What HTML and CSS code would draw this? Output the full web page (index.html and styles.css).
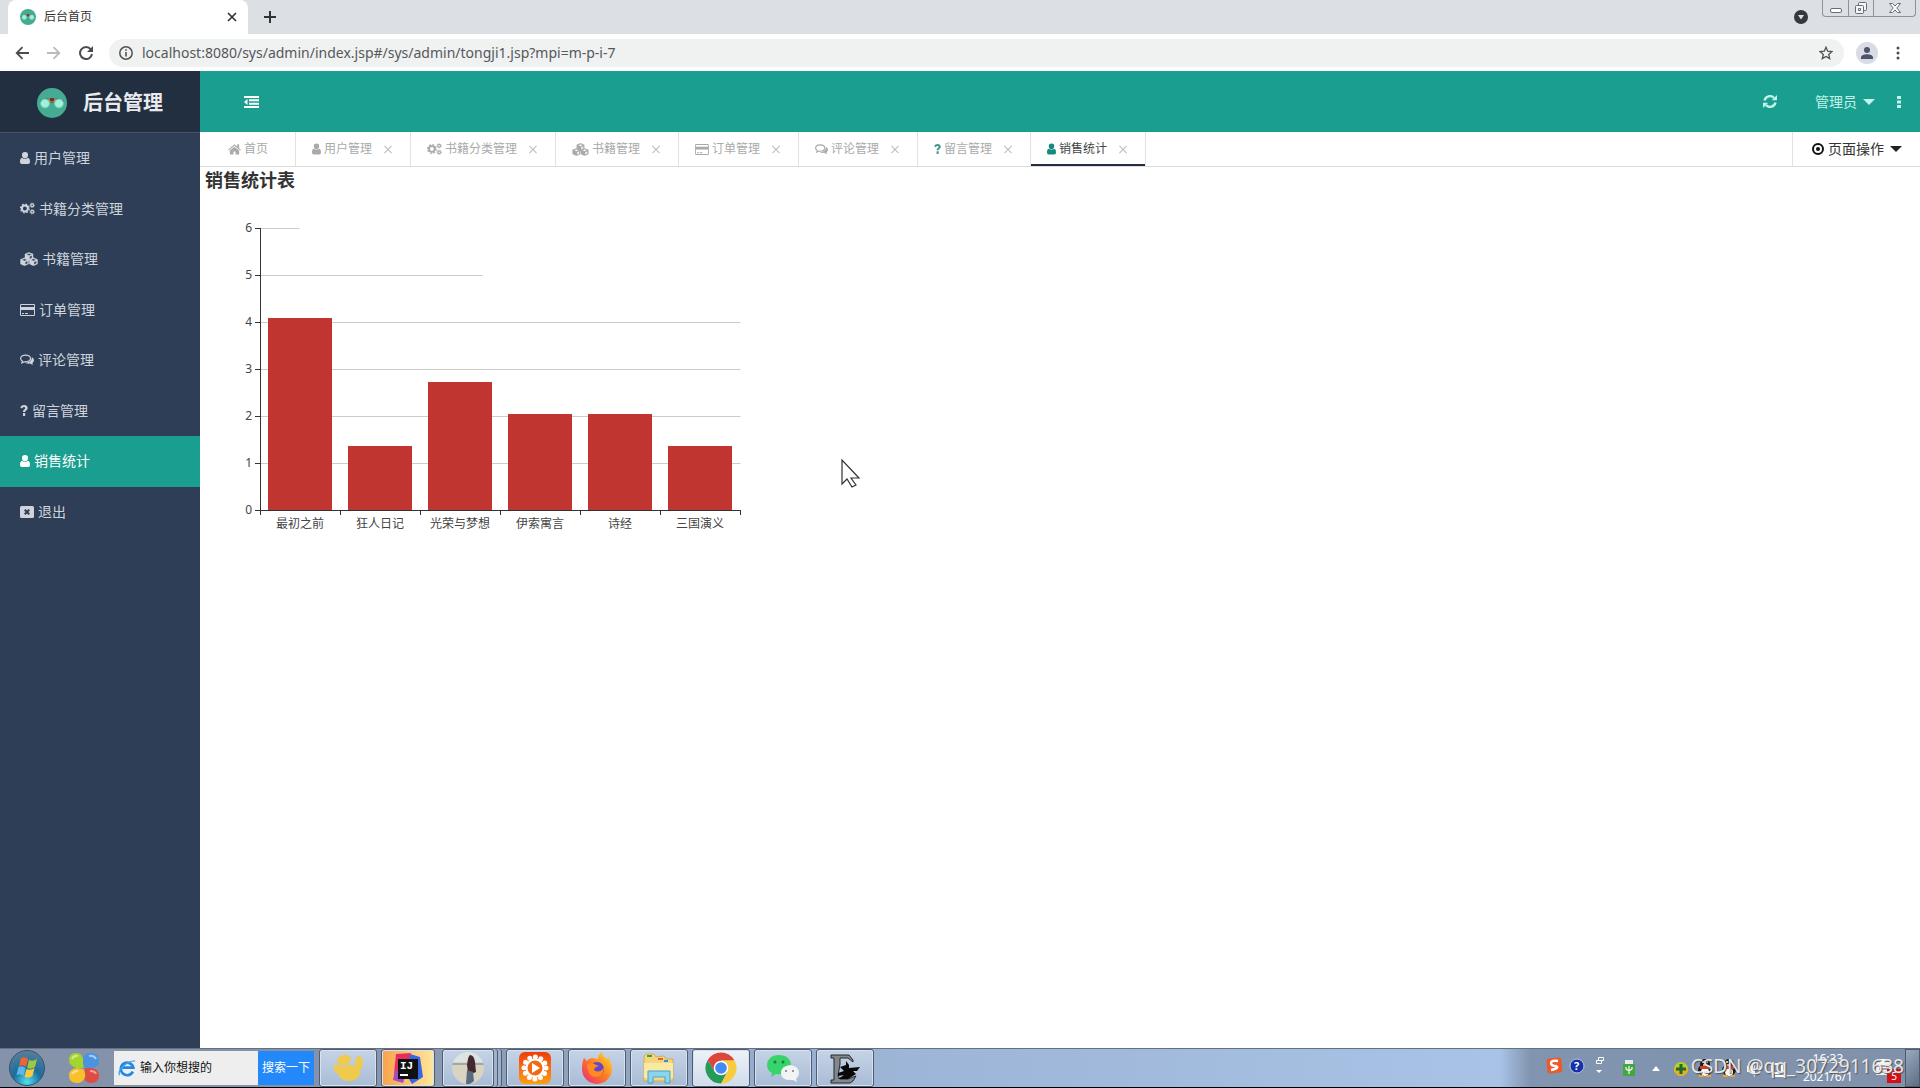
FILE: index.html
```html
<!DOCTYPE html>
<html lang="zh-CN">
<head>
<meta charset="utf-8">
<title>后台首页</title>
<link rel="stylesheet" href="styles.css">
</head>
<body>
<svg class="defs" aria-hidden="true">
  <defs>
    <symbol id="user" viewBox="0 0 10 12"><path d="M5 0a3 3 0 0 0-3 3.300C2 5 3.200 6.500 5 6.500S8 5 8 3.300A3 3 0 0 0 5 0zM2.200 5.800C.6 6 0 7.500 0 9.800 0 11.200.7 12 1.900 12h6.200c1.200 0 1.900-.8 1.900-2.200 0-2.300-.6-3.800-2.200-4-.7.8-1.700 1.300-2.800 1.300s-2.100-.5-2.800-1.300z"/></symbol>
    <symbol id="cogs" viewBox="0 0 16 13"><g fill="none" stroke="currentColor"><circle cx="5.200" cy="6.500" r="3.200" stroke-width="2.200"/><circle cx="5.200" cy="6.500" r="4.700" stroke-width="1.300" stroke-dasharray="1.900 1.790"/><circle cx="13" cy="3" r="1.500" stroke-width="1.300"/><circle cx="13" cy="3" r="2.400" stroke-width=".8" stroke-dasharray="1 .88"/><circle cx="13" cy="10" r="1.500" stroke-width="1.300"/><circle cx="13" cy="10" r="2.400" stroke-width=".8" stroke-dasharray="1 .88"/></g></symbol>
    <symbol id="cubes" viewBox="0 0 18 14"><g fill="currentColor" stroke="currentColor" stroke-width=".4" stroke-linejoin="round"><path fill-rule="evenodd" d="M9 .4 5 2v4.500L9 8.400l4-1.900V2zM9 1.400l2.700 1L9 3.500l-2.700-1.100zM9.600 4.500 12 3.500V6L9.600 7.200z"/><path fill-rule="evenodd" d="M4.600 5.800.5 7.400v4.500l4.100 1.800 4-1.800V7.400zM4.600 6.800l2.700 1-2.700 1.100-2.700-1.100zM5.200 9.900l2.400-1v2.500l-2.400 1.200z"/><path fill-rule="evenodd" d="m13.400 5.800-4 1.600v4.500l4 1.800 4.100-1.800V7.400zM13.400 6.800l2.700 1-2.700 1.100-2.700-1.100zM14 9.900l2.400-1v2.500L14 12.600z"/></g></symbol>
    <symbol id="card" viewBox="0 0 15 12"><path fill-rule="evenodd" d="M1.200 0h12.600Q15 0 15 1.200v9.600q0 1.200-1.200 1.200H1.200Q0 12 0 10.800V1.200Q0 0 1.200 0zM1 1v2h13V1zM1 6v5h13V6zM2 9h2v1H2zM5 9h3v1H5z"/></symbol>
    <symbol id="comments" viewBox="0 0 15 12"><path d="M6 .7C3 .7.7 2.300.7 4.400c0 1.200.8 2.200 2 2.900L2 9c1.200-.3 2-.8 2.600-1.100C9 8.300 11.300 6.500 11.300 4.400S9 .7 6 .7z" fill="none" stroke="currentColor" stroke-width="1.300"/><path d="M12.600 3c1.600.8 2.400 2 2.400 3.200 0 1.300-.8 2.200-1.900 2.900l1.100 2.100c-1.700-.2-2.700-.8-3.400-1.400-2 .3-4 0-5.300-.9 4.400.1 7.300-2.400 7.100-5.900z"/></symbol>
    <symbol id="question" viewBox="0 0 8 12"><path d="M2.900 8.700h2.400V12H2.900zM0 2.600C.9.900 2.200 0 4.200 0 6.300 0 8 1.400 8 3.300c0 2.500-2.700 2.800-2.700 4.300H2.900c0-2.700 2.300-2.800 2.300-4.100 0-.8-.5-1.200-1.200-1.200-.9 0-1.400.6-2.100 1.500z"/></symbol>
    <symbol id="exit" viewBox="0 0 14 12"><path fill-rule="evenodd" d="M1.500 0h11Q14 0 14 1.500v9q0 1.500-1.500 1.500h-11Q0 12 0 10.500v-9Q0 0 1.500 0zM4 4.500 5.600 6 4 7.500 5.400 9 7 7.400 8.600 9 10 7.500 8.400 6 10 4.500 8.600 3 7 4.600 5.400 3z"/></symbol>
    <symbol id="home" viewBox="0 0 14 12"><path d="M7 1 0 6.800l.8.900L7 2.600l6.200 5.100.8-.9-2-1.700V1h-2v2.400zM7 3.600 2 7.700V12h3.900V8.600h2.200V12H12V7.700z"/></symbol>
    <symbol id="goggles" viewBox="0 0 30 30"><circle cx="15" cy="15" r="15" fill="#45ab92"/><path d="M3 13q4-4 10-2l2-1 2 1q6-2 10 2v2H3z" fill="#62695d"/><path d="M11 11h8v4h-2l-2-2-2 2h-2z" fill="#d66c3d"/><circle cx="8" cy="15.500" r="4.500" fill="#9ff0dc" stroke="#68c7ae"/><circle cx="22" cy="15.500" r="4.500" fill="#9ff0dc" stroke="#68c7ae"/><path d="M13 10h4v3h-4z" fill="#553d38"/></symbol>
  </defs>
</svg>

<header class="browser">
  <div class="tabstrip">
    <div class="browser-tab">
      <svg class="favicon"><use href="#goggles"/></svg>
      <span class="browser-title">后台首页</span>
      <button class="plain" aria-label="关闭标签页"><svg width="10" height="10" viewBox="0 0 10 10"><path d="m1 1 8 8M9 1 1 9" stroke="#333" stroke-width="1.700"/></svg></button>
    </div>
    <button class="plain newtab" aria-label="新标签页"><svg width="12" height="12" viewBox="0 0 12 12"><path d="M6 0v12M0 6h12" stroke="#333" stroke-width="2"/></svg></button>
    <div class="window-side">
      <svg class="tabsearch" width="14" height="14" viewBox="0 0 14 14"><circle cx="7" cy="7" r="7" fill="#35383d"/><path d="M4 5h6L7 9.500z" fill="#dee1e6"/></svg>
      <div class="window-controls">
        <button aria-label="最小化"><svg width="14" height="16" viewBox="0 0 14 16"><rect x="1.500" y="8.500" width="11" height="4" rx="1.500" fill="#fff" stroke="#676c75"/></svg></button>
        <button aria-label="还原"><svg width="14" height="16" viewBox="0 0 14 16"><g fill="#f4f5f7" stroke="#676c75"><rect x="4.500" y="2.500" width="8" height="8" rx="1"/><rect x="1.500" y="5.500" width="8" height="8" rx="1"/><path d="M4.500 8.500h2v2h-2z"/></g></svg></button>
        <button class="wide" aria-label="关闭"><svg width="14" height="16" viewBox="0 0 14 16"><path d="M1.500 3.500h3L7 6l2.500-2.500h3L8.800 8l3.700 4.500h-3L7 10l-2.500 2.500h-3L5.200 8z" fill="#fff" stroke="#676c75"/></svg></button>
      </div>
    </div>
  </div>
  <div class="toolbar">
    <button class="plain" aria-label="后退"><svg width="14" height="14" viewBox="0 0 14 14"><path d="M14 7H2M7.500 1.200 1.700 7l5.800 5.800" fill="none" stroke="#4a4d51" stroke-width="1.800"/></svg></button>
    <button class="plain" aria-label="前进"><svg width="14" height="14" viewBox="0 0 14 14"><path d="M0 7h12M6.500 1.200 12.300 7l-5.800 5.800" fill="none" stroke="#b9bbbe" stroke-width="1.800"/></svg></button>
    <button class="plain" aria-label="刷新"><svg width="14" height="14" viewBox="0 0 14 14"><path d="M11.800 3.300A6 6 0 1 0 13 8" fill="none" stroke="#4a4d51" stroke-width="2"/><path d="M14 0v6H8z" fill="#4a4d51"/></svg></button>
    <label class="address">
      <svg width="14" height="14" viewBox="0 0 14 14"><circle cx="7" cy="7" r="6.200" fill="none" stroke="#4f5256" stroke-width="1.500"/><path d="M6.200 6h1.600v4.500H6.200zM6.200 3.200h1.600v1.600H6.200z" fill="#4f5256"/></svg>
      <input type="text" aria-label="地址" value="localhost:8080/sys/admin/index.jsp#/sys/admin/tongji1.jsp?mpi=m-p-i-7">
      <svg width="14" height="14" viewBox="0 0 14 14"><path d="m7 1.200 1.700 4 4.300.4-3.300 2.800 1 4.200L7 10.400l-3.700 2.200 1-4.200L1 5.600l4.300-.4z" fill="none" stroke="#4f5256" stroke-width="1.300"/></svg>
    </label>
    <button class="plain" aria-label="账户"><svg width="22" height="22" viewBox="0 0 22 22"><circle cx="11" cy="11" r="11" fill="#dadce5"/><circle cx="11" cy="8" r="3" fill="#4e536b"/><path d="M5 17v-1.500C5 13 9 12.300 11 12.300s6 .7 6 3.200V17z" fill="#4e536b"/></svg></button>
    <button class="plain menu" aria-label="菜单"><svg width="4" height="14" viewBox="0 0 4 14"><g fill="#4a4d51"><circle cx="2" cy="2" r="1.500"/><circle cx="2" cy="7" r="1.500"/><circle cx="2" cy="12" r="1.500"/></g></svg></button>
  </div>
</header>

<div class="app">
  <aside class="sidebar">
    <div class="brand"><svg width="30" height="30"><use href="#goggles"/></svg><span>后台管理</span></div>
    <nav class="side-nav">
      <a href="#"><svg width="10" height="12"><use href="#user"/></svg>用户管理</a>
      <a href="#"><svg width="15" height="13"><use href="#cogs"/></svg>书籍分类管理</a>
      <a href="#"><svg width="18" height="14"><use href="#cubes"/></svg>书籍管理</a>
      <a href="#"><svg width="15" height="12"><use href="#card"/></svg>订单管理</a>
      <a href="#"><svg width="14" height="12"><use href="#comments"/></svg>评论管理</a>
      <a href="#"><svg width="8" height="11"><use href="#question"/></svg>留言管理</a>
      <a href="#" class="active"><svg width="10" height="12"><use href="#user"/></svg>销售统计</a>
      <a href="#"><svg width="14" height="12"><use href="#exit"/></svg>退出</a>
    </nav>
  </aside>
  <div class="main">
    <div class="topbar">
      <button class="plain" aria-label="收起菜单"><svg width="15" height="12" viewBox="0 0 15 12"><path d="M0 0h15v2H0zM5 3.300h10v2H5zM5 6.700h10v2H5zM0 10h15v2H0zM3.500 3v6L0 6z" fill="#fff"/></svg></button>
      <div class="top-actions">
        <button class="plain" aria-label="刷新"><svg width="14" height="13" viewBox="0 0 14 13"><path d="M1.500 5.500A5.500 5.500 0 0 1 11 3M12.500 7.500A5.500 5.500 0 0 1 3 10" fill="none" stroke="currentColor" stroke-width="2.400"/><path d="M14 0v5.200H8.800zM0 13V7.800h5.200z" fill="currentColor"/></svg></button>
        <button class="plain admin">管理员<i class="caret"></i></button>
        <button class="plain" aria-label="更多"><svg width="4" height="12" viewBox="0 0 4 12"><path d="M0 0h4v3H0zM0 4.500h4v3H0zM0 9h4v3H0z" fill="currentColor"/></svg></button>
      </div>
    </div>
    <div class="tabs">
      <a href="#" class="tab home"><svg width="13" height="12"><use href="#home"/></svg>首页</a>
      <div class="tab"><svg width="9" height="12"><use href="#user"/></svg><a href="#">用户管理</a><button class="close" aria-label="关闭"></button></div>
      <div class="tab"><svg width="15" height="12"><use href="#cogs"/></svg><a href="#">书籍分类管理</a><button class="close" aria-label="关闭"></button></div>
      <div class="tab"><svg width="17" height="13"><use href="#cubes"/></svg><a href="#">书籍管理</a><button class="close" aria-label="关闭"></button></div>
      <div class="tab"><svg width="14" height="11"><use href="#card"/></svg><a href="#">订单管理</a><button class="close" aria-label="关闭"></button></div>
      <div class="tab"><svg width="13" height="11"><use href="#comments"/></svg><a href="#">评论管理</a><button class="close" aria-label="关闭"></button></div>
      <div class="tab ask"><svg width="7" height="10"><use href="#question"/></svg><a href="#">留言管理</a><button class="close" aria-label="关闭"></button></div>
      <div class="tab current"><svg width="9" height="12"><use href="#user"/></svg><a href="#">销售统计</a><button class="close" aria-label="关闭"></button></div>
      <button class="plain page-ops"><svg width="12" height="12" viewBox="0 0 12 12"><circle cx="6" cy="6" r="5" fill="none" stroke="#111" stroke-width="2"/><circle cx="6" cy="6" r="2" fill="#111"/></svg>页面操作<i class="caret"></i></button>
    </div>
    <main class="content">
      <h1>销售统计表</h1>
      <svg class="chart" width="600" height="360" viewBox="0 0 600 360" role="img" aria-label="销售统计表">
        <path d="M60.500 35.500h39M60.500 82.500h222M60.500 129.500h480M60.500 176.500h480M60.500 223.500h480M60.500 270.500h480" stroke="#ccc"/>
        <g fill="#c03530">
          <rect x="68" y="125" width="64" height="192"/><rect x="148" y="253" width="64" height="64"/><rect x="228" y="189" width="64" height="128"/><rect x="308" y="221" width="64" height="96"/><rect x="388" y="221" width="64" height="96"/><rect x="468" y="253" width="64" height="64"/>
        </g>
        <path d="M60.500 35v287M55 317.500h486M55 35.500h5M55 82.500h5M55 129.500h5M55 176.500h5M55 223.500h5M55 270.500h5M140.500 317v5M220.500 317v5M300.500 317v5M380.500 317v5M460.500 317v5M540.500 317v5" fill="none" stroke="#333"/>
        <g class="y-labels"><text x="52" y="39">6</text><text x="52" y="86">5</text><text x="52" y="133">4</text><text x="52" y="180">3</text><text x="52" y="227">2</text><text x="52" y="274">1</text><text x="52" y="321">0</text></g>
        <g class="x-labels"><text x="100" y="335">最初之前</text><text x="180" y="335">狂人日记</text><text x="260" y="335">光荣与梦想</text><text x="340" y="335">伊索寓言</text><text x="420" y="335">诗经</text><text x="500" y="335">三国演义</text></g>
      </svg>
    </main>
  </div>
</div>

<footer class="taskbar">
  <button class="plain start" aria-label="开始"><svg width="36" height="36" viewBox="0 0 36 36"><defs><radialGradient id="orb" cx=".5" cy=".9" r=".9"><stop offset="0" stop-color="#4fe0f5"/><stop offset=".45" stop-color="#1b6d9c"/><stop offset="1" stop-color="#5d7f9b"/></radialGradient></defs><circle cx="18" cy="18" r="17.500" fill="url(#orb)" stroke="#3b5068"/><path d="M12 8q4-2 7 1l-2 8q-3-3-7-1z" fill="#ee6434"/><path d="M20 10q4 2 8-1l-2 8q-4 3-8 1z" fill="#9cc93f"/><path d="M9.500 17q4-2 7 1l-2 8q-3-3-7-1z" fill="#5db7ea"/><path d="M17.500 19q4 2 8-1l-2 8q-4 3-8 1z" fill="#fbc93a"/></svg></button>
  <button class="plain clover" aria-label="浏览器"><svg width="32" height="32" viewBox="0 0 32 32"><path d="M15 16H9Q1 14 1 8 1 1 8 1c6 0 7 5 8 9z" fill="#a4d52a"/><path d="M15 12Q14 1 23 1q8 0 8 7.500 0 7-8 7.500h-5z" fill="#4a93e0"/><path d="M17 16h5q9 0 9 7.500 0 7.500-8 7.500-7 0-7-7z" fill="#de4c42"/><path d="M15 17q3 4 2 8-2 6-8 6-8 0-8-7.500Q1 17 9 16z" fill="#f8c12b"/><path d="M4 7q2-4 6-3M21 4q5-1 7 3M4 22q2-3 6-3M22 19q5 0 6 3" stroke="#fff" stroke-opacity=".5" stroke-width="2" fill="none"/></svg></button>
  <form class="search">
    <svg width="18" height="20" viewBox="0 0 20 20"><path d="M16.500 14A7 7 0 1 1 17 9.500H5" fill="none" stroke="#2587e4" stroke-width="3"/><path d="M2 18C-1 14 8 2 19 2" fill="none" stroke="#39a5ef" stroke-width="1.500"/></svg>
    <input type="text" aria-label="搜索" value="输入你想搜的">
    <button type="button">搜索一下</button>
  </form>
  <div class="tasks">
    <button aria-label="应用"><svg width="32" height="32" viewBox="0 0 32 32"><g fill="#efca4d"><ellipse cx="17" cy="21" rx="11" ry="8"/><ellipse cx="6" cy="17" rx="4" ry="5" transform="rotate(-40 6 17)"/><ellipse cx="12" cy="8" rx="7" ry="5" transform="rotate(-15 12 8)"/><ellipse cx="27" cy="11" rx="4" ry="7"/></g></svg></button>
    <button class="small hot" aria-label="IntelliJ IDEA"><svg width="32" height="32" viewBox="0 0 32 32"><path d="m4 2 15-1-3 14L2 22z" fill="#e62d61"/><path d="m18 2 10 3 3 20-11 7-5-8z" fill="#3765e8"/><path d="m3 18 11 4-3 9-10-3z" fill="#a44ac3"/><path d="M6 7h20v20H6z" fill="#111"/><path d="M8 22h8v2H8z" fill="#fff"/><text x="8" y="17" class="ij">IJ</text></svg></button>
    <button class="small stacked" aria-label="照片"><svg width="32" height="32" viewBox="0 0 32 32"><defs><clipPath id="round"><circle cx="16" cy="16" r="16"/></clipPath></defs><g clip-path="url(#round)"><path d="M0 0h32v32H0z" fill="#d9d3c2"/><path d="M0 0h32v10H0z" fill="#dce3e2"/><path d="M0 11h32v2H0z" fill="#9aabb0"/><path d="M18 3q4 0 5 7l1 10-5 2-3-2-1-7q1-9 3-10z" fill="#43282f"/><path d="m15 18 6 2 1 9-4 3h-4z" fill="#586a80"/></g></svg></button>
    <button aria-label="播放器"><svg width="32" height="32" viewBox="0 0 32 32"><defs><linearGradient id="sun" x2="0" y2="1"><stop stop-color="#ef3d0b"/><stop offset="1" stop-color="#ff9d12"/></linearGradient></defs><rect width="32" height="32" rx="6" fill="url(#sun)"/><circle cx="16" cy="16" r="11" fill="none" stroke="#fff" stroke-width="5" stroke-dasharray="0 5.760" stroke-linecap="round"/><circle cx="16" cy="16" r="8.500" fill="#f26a12" stroke="#fff" stroke-width="2"/><path d="m13 11 8 5-8 5z" fill="#fff"/></svg></button>
    <button aria-label="Firefox"><svg width="32" height="32" viewBox="0 0 32 32"><defs><linearGradient id="fire" x1="1" x2="0" y2="1"><stop stop-color="#ffe52e"/><stop offset=".5" stop-color="#ff7a25"/><stop offset="1" stop-color="#e9257d"/></linearGradient></defs><path d="M3 6 6 9q2-3 6-3l5 1q0-5 4-7 0 4 5 7l1-2q4 6 4 12A15 15 0 0 1 1 17Q1 10 3 6z" fill="url(#fire)"/><circle cx="16" cy="17" r="7" fill="#6547c6"/><path d="M6 13q3-4 7-1l5 2q-5 1-5 4 5 4 10-2-1 9-9 9-7-1-8-12z" fill="#ff8b22"/></svg></button>
    <button aria-label="资源管理器"><svg width="34" height="32" viewBox="0 0 34 32"><path d="M2 4 4 2h8l2 3 8-1 2 3h7v22H2z" fill="#f3d77d" stroke="#d0ad57"/><path d="M5 3h5v2H5z" fill="#31a746"/><path d="M16 6h5v2h-5z" fill="#e25d43"/><path d="M22 8h4v2h-4z" fill="#338ddd"/><path d="M2 11h29v15H2z" fill="#fae9a5"/><path d="M6 31V19h22v12h-5v-6H11v6z" fill="#8bd4ef" stroke="#4b9fc6"/></svg></button>
    <button class="lit" aria-label="Chrome"><svg width="32" height="32" viewBox="0 0 32 32"><path d="M16 16 2.600 8.200A15.500 15.500 0 0 1 29.400 8.200z" fill="#dc463b"/><path d="M16 16V8.200h13.400A15.500 15.500 0 0 1 16 31.500z" fill="#f7cb42"/><path d="M2.600 8.200H16V16l-6 4z" fill="#dc463b"/><path d="M2.600 8.200 10 20l12 0-6 11.500A15.500 15.500 0 0 1 2.600 8.200z" fill="#269b57"/><circle cx="16" cy="16" r="7.300" fill="#fff"/><circle cx="16" cy="16" r="5.800" fill="#438af4"/></svg></button>
    <button aria-label="微信"><svg width="34" height="32" viewBox="0 0 34 32"><path d="M13 3C5 3 1 8 1 13q0 5 5 8l-1 4 5-3q12 2 15-9C25 7 20 3 13 3z" fill="#37d36b"/><path d="M24 13q9 1 9 8 0 3-3 6l1 3-4-2q-12 1-12-7 0-7 9-8z" fill="#f2f3f5"/><g fill="#21764c"><circle cx="9" cy="10" r="1.500"/><circle cx="17" cy="10" r="1.500"/></g><circle cx="20" cy="19" r="1" fill="#777"/><circle cx="27" cy="19" r="1" fill="#777"/></svg></button>
    <button aria-label="录屏"><svg width="34" height="32" viewBox="0 0 34 32"><path d="M3 3h18l4 5v2l-5-4h-8v6l-2 12 2 3h8l8-3-3 5-3 2H3v-3h3V6H3z" fill="#84888c" stroke="#25282c"/><path d="m12 15 6-2V9l3 4v3l11-1-3 4h-4l3 3-8 5H10l6-4-6 1v-3l6-2z" fill="#080808"/></svg></button>
  </div>
  <div class="tray">
    <svg class="tray-icons" width="288" height="38" viewBox="0 0 288 38">
      <rect x="6" y="9" width="15" height="15" rx="3" fill="#ed5a27" transform="rotate(-6 13 17)"/><path d="M17 12q-7-1-7 2t5 3q4 2-5 4" fill="none" stroke="#fff" stroke-width="2.500"/>
      <circle cx="36" cy="17" r="7" fill="#1530a9" stroke="#bac5e8"/><text x="33" y="21" class="help">?</text>
      <path d="M57.500 8.500h5v3h-5zM55.500 11.500h5v3h-5z" fill="none" stroke="#fff"/><path d="M55 21h6l-3 3z" fill="#fff"/>
      <path d="M84 11h8v5h-8z" fill="#e7ebef"/><path d="M82 15h12v12H82z" fill="#42a73c"/><path d="M88 25v-8M85 18v2l3 2 3-2v-2" fill="none" stroke="#fff" stroke-width="1.200"/>
      <path d="m111 22 4-5 4 5z" fill="#fff"/>
      <circle cx="140" cy="20" r="7" fill="#b9cf29"/><path d="M133 20a7 7 0 0 0 14 0z" fill="#e5ae23"/><path d="M140 15v10M135 20h10" stroke="#21682b" stroke-width="3"/>
      <g id="penguin"><ellipse cx="164" cy="21" rx="7" ry="6" fill="#181818"/><circle cx="164" cy="15" r="5" fill="#181818"/><ellipse cx="164" cy="23" rx="4" ry="4" fill="#fff"/><path d="M159 17h10v3h-10z" fill="#d83a27"/><path d="M158 26h5v2h-5zM165 26h5v2h-5zM162 15h4v2h-4z" fill="#f2a32a"/><circle cx="162" cy="13" r="1" fill="#fff"/><circle cx="166" cy="13" r="1" fill="#fff"/></g><use href="#penguin" x="24"/>
      <path d="M206 17h3l5-5v16l-5-5h-3zM218 15q4 5 0 10" fill="#fff"/><path d="M231 15h10v9h-10zM234 27h10" fill="none" stroke="#fff" stroke-width="2"/>
    </svg>
    <div class="clock"><span>16:33</span><span>2021/6/1</span></div>
    <div class="notes"><svg width="18" height="20" viewBox="0 0 18 20"><path d="M1 4h15v13H1z" fill="#f4f4f4"/><path d="M4 8h10M4 11h10M4 14h7" stroke="#555"/><path d="M5 1h7v4H5z" fill="#fff"/></svg><span class="count">5</span></div>
    <div class="show-desktop"></div>
    <span class="watermark">CSDN @qq_3072911638</span>
  </div>
</footer>
<svg class="cursor" width="20" height="30" viewBox="0 0 20 30"><path d="M1 1v24l5-5 5 8 4-2-5-7h8z" fill="#fff" stroke="#333" stroke-width="1.200"/></svg>
</body>
</html>
```
FILE: styles.css
```css
* { box-sizing: border-box; }
body {
  margin: 0;
  min-height: 100vh;
  display: flex;
  flex-direction: column;
  background: #fff;
  color: #333;
  font: 14px/20px "Noto Sans", "Noto Sans CJK SC", sans-serif;
}
a { color: inherit; text-decoration: none; }
svg { display: block; flex: none; fill: currentColor; }
.defs { position: absolute; width: 0; height: 0; }
button, input { font: inherit; color: inherit; border: 0; background: none; padding: 0; outline: 0; }
.plain { display: flex; align-items: center; }

.tabstrip { display: flex; align-items: center; height: 34px; background: #dcdfe4; }
.browser-tab { display: flex; align-items: center; align-self: stretch; width: 240px; margin-left: 8px; padding: 0 11px 0 12px; background: #fff; border-radius: 8px 8px 0 0; }
.favicon { width: 16px; height: 16px; }
.browser-title { flex: 1; margin-left: 8px; font-size: 12px; }
.newtab { margin-left: 16px; }
.window-side { display: flex; align-items: center; align-self: stretch; margin-left: auto; padding-right: 4px; gap: 14px; }
.window-controls { display: flex; align-self: flex-start; height: 17px; border: 1px solid #8e9299; border-top: 0; border-radius: 0 0 4px 4px; }
.window-controls button { display: flex; justify-content: center; width: 25px; }
.window-controls button + button { border-left: 1px solid #8e9299; }
.window-controls .wide { width: 42px; }
.toolbar { display: flex; align-items: center; height: 37px; padding: 0 20px 0 15px; gap: 18px; }
.address { display: flex; align-items: center; flex: 1; height: 28px; margin-left: -2px; margin-right: -6px; padding: 0 11px 0 10px; gap: 9px; border-radius: 14px; background: #f0f1f1; }
.address input { flex: 1; font: 14px/20px "Noto Sans", sans-serif; color: #55585c; }

.app { display: flex; flex: 1; }
.sidebar { width: 200px; background: #2d3e56; color: #cfd4dc; }
.brand { display: flex; align-items: center; height: 62px; padding: 2px 0 0 37px; gap: 16px; background: #222f41; border-bottom: 1px solid #48566a; color: #e8eaed; font-size: 20px; font-weight: 700; }
.side-nav { display: grid; grid-template-rows: repeat(8, 1fr); height: 404px; }
.side-nav a { display: flex; align-items: center; padding-left: 20px; gap: 4px; }
.side-nav .active { background: #199e8f; color: #fff; }
.main { flex: 1; min-width: 0; }
.topbar { display: flex; align-items: center; justify-content: space-between; height: 61px; padding: 0 19px 0 44px; background: #199e8f; }
.top-actions { display: flex; align-items: center; color: #c3f3ea; gap: 22px; }
.top-actions .admin { margin-left: 16px; }
.caret { margin-left: 6px; border: 6px solid transparent; border-top-color: currentColor; border-bottom: 0; }
.tabs { display: flex; height: 35px; border-bottom: 1px solid #ddd; color: #aaa; font-size: 12px; }
.tab { display: flex; align-items: center; padding: 0 17px 0 16px; gap: 3px; border-right: 1px solid #e2e2e2; }
.tab.home { padding: 0 27px 0 28px; }
.tab.ask svg { color: #45958e; }
.tab.current { box-shadow: inset 0 -2px #222f41; color: #444; }
.tab.current svg { color: #128b7e; }
.close { position: relative; width: 10px; height: 10px; margin-left: 8px; }
.close::before, .close::after { content: ""; position: absolute; left: 0; top: 5px; width: 10px; height: 1px; background: #bbb; transform: rotate(45deg); }
.close::after { transform: rotate(-45deg); }
.page-ops { margin-left: auto; padding: 0 18px 0 19px; border-left: 1px solid #e2e2e2; font-size: 14px; gap: 4px; color: #333; }
.page-ops .caret { margin-left: 2px; color: #222; }
.content { padding: 1px 0 0 5px; }
h1 { margin: 0; font-size: 18px; line-height: 25px; font-weight: 700; }
.chart { margin-left: -5px; font-size: 12px; fill: #444; }
.y-labels { text-anchor: end; }
.x-labels { text-anchor: middle; }

.taskbar { display: flex; align-items: center; height: 40px; border-top: 1px solid #66707e; border-bottom: 1px solid #000; background: linear-gradient(90deg, #8593aa 0, #8593aa 320px, #9db5d6 900px, #a8c3e6 1500px, #8195b0 1530px, #8091ab); font-size: 12px; }
.start { margin-left: 9px; }
.clover { margin-left: 23px; }
.search { display: flex; align-items: center; align-self: stretch; width: 200px; margin: 2px 5px 2px 14px; padding-left: 4px; background: #eee; color: #111; gap: 4px; }
.search input { flex: 1; min-width: 0; }
.search button { align-self: stretch; width: 56px; background: #2388fa; color: #fff; }
.tasks { display: flex; align-self: stretch; gap: 4px; }
.tasks button { display: flex; align-items: center; justify-content: center; width: 58px; border: 1px solid #4e5d73; border-radius: 3px; background: linear-gradient(#c5d3e6, #a9bcd6); box-shadow: inset 0 0 0 1px #d7e2f0; }
.tasks .small { width: 54px; }
.tasks .hot { background: linear-gradient(90deg, #f9a24c, #ffe69a); }
.tasks .lit { background: linear-gradient(#eef2f7, #cfdcec); }
.tasks .stacked { width: 52px; margin-left: 3px; margin-right: 8px; box-shadow: inset 0 0 0 1px #d7e2f0, 3px 0 #9fb2cc, 4px 0 #4e5d73, 7px 0 #9fb2cc, 8px 0 #4e5d73; }
.ij { font: 700 11px "Liberation Mono", monospace; fill: #fff; }
.tray { position: relative; display: flex; align-items: center; align-self: stretch; margin-left: auto; color: #fff; }
.help { font: 700 11px "Noto Sans", sans-serif; fill: #fff; }
.clock { display: flex; flex-direction: column; align-items: center; margin-left: -26px; line-height: 18px; }
.notes { position: relative; margin: 0 12px 0 22px; }
.count { position: absolute; left: 12px; top: 11px; width: 14px; height: 14px; background: #d80e16; font-size: 10px; line-height: 14px; text-align: center; }
.show-desktop { align-self: stretch; width: 15px; border: 1px solid #4e5b6e; background: linear-gradient(135deg, #99a9be, #5d6d84); }
.watermark { position: absolute; right: 16px; top: 5px; font-size: 19px; line-height: 24px; color: #e7e9ec; text-shadow: 1px 1px 1px #555; white-space: nowrap; }
.cursor { position: absolute; left: 841px; top: 459px; }
```
